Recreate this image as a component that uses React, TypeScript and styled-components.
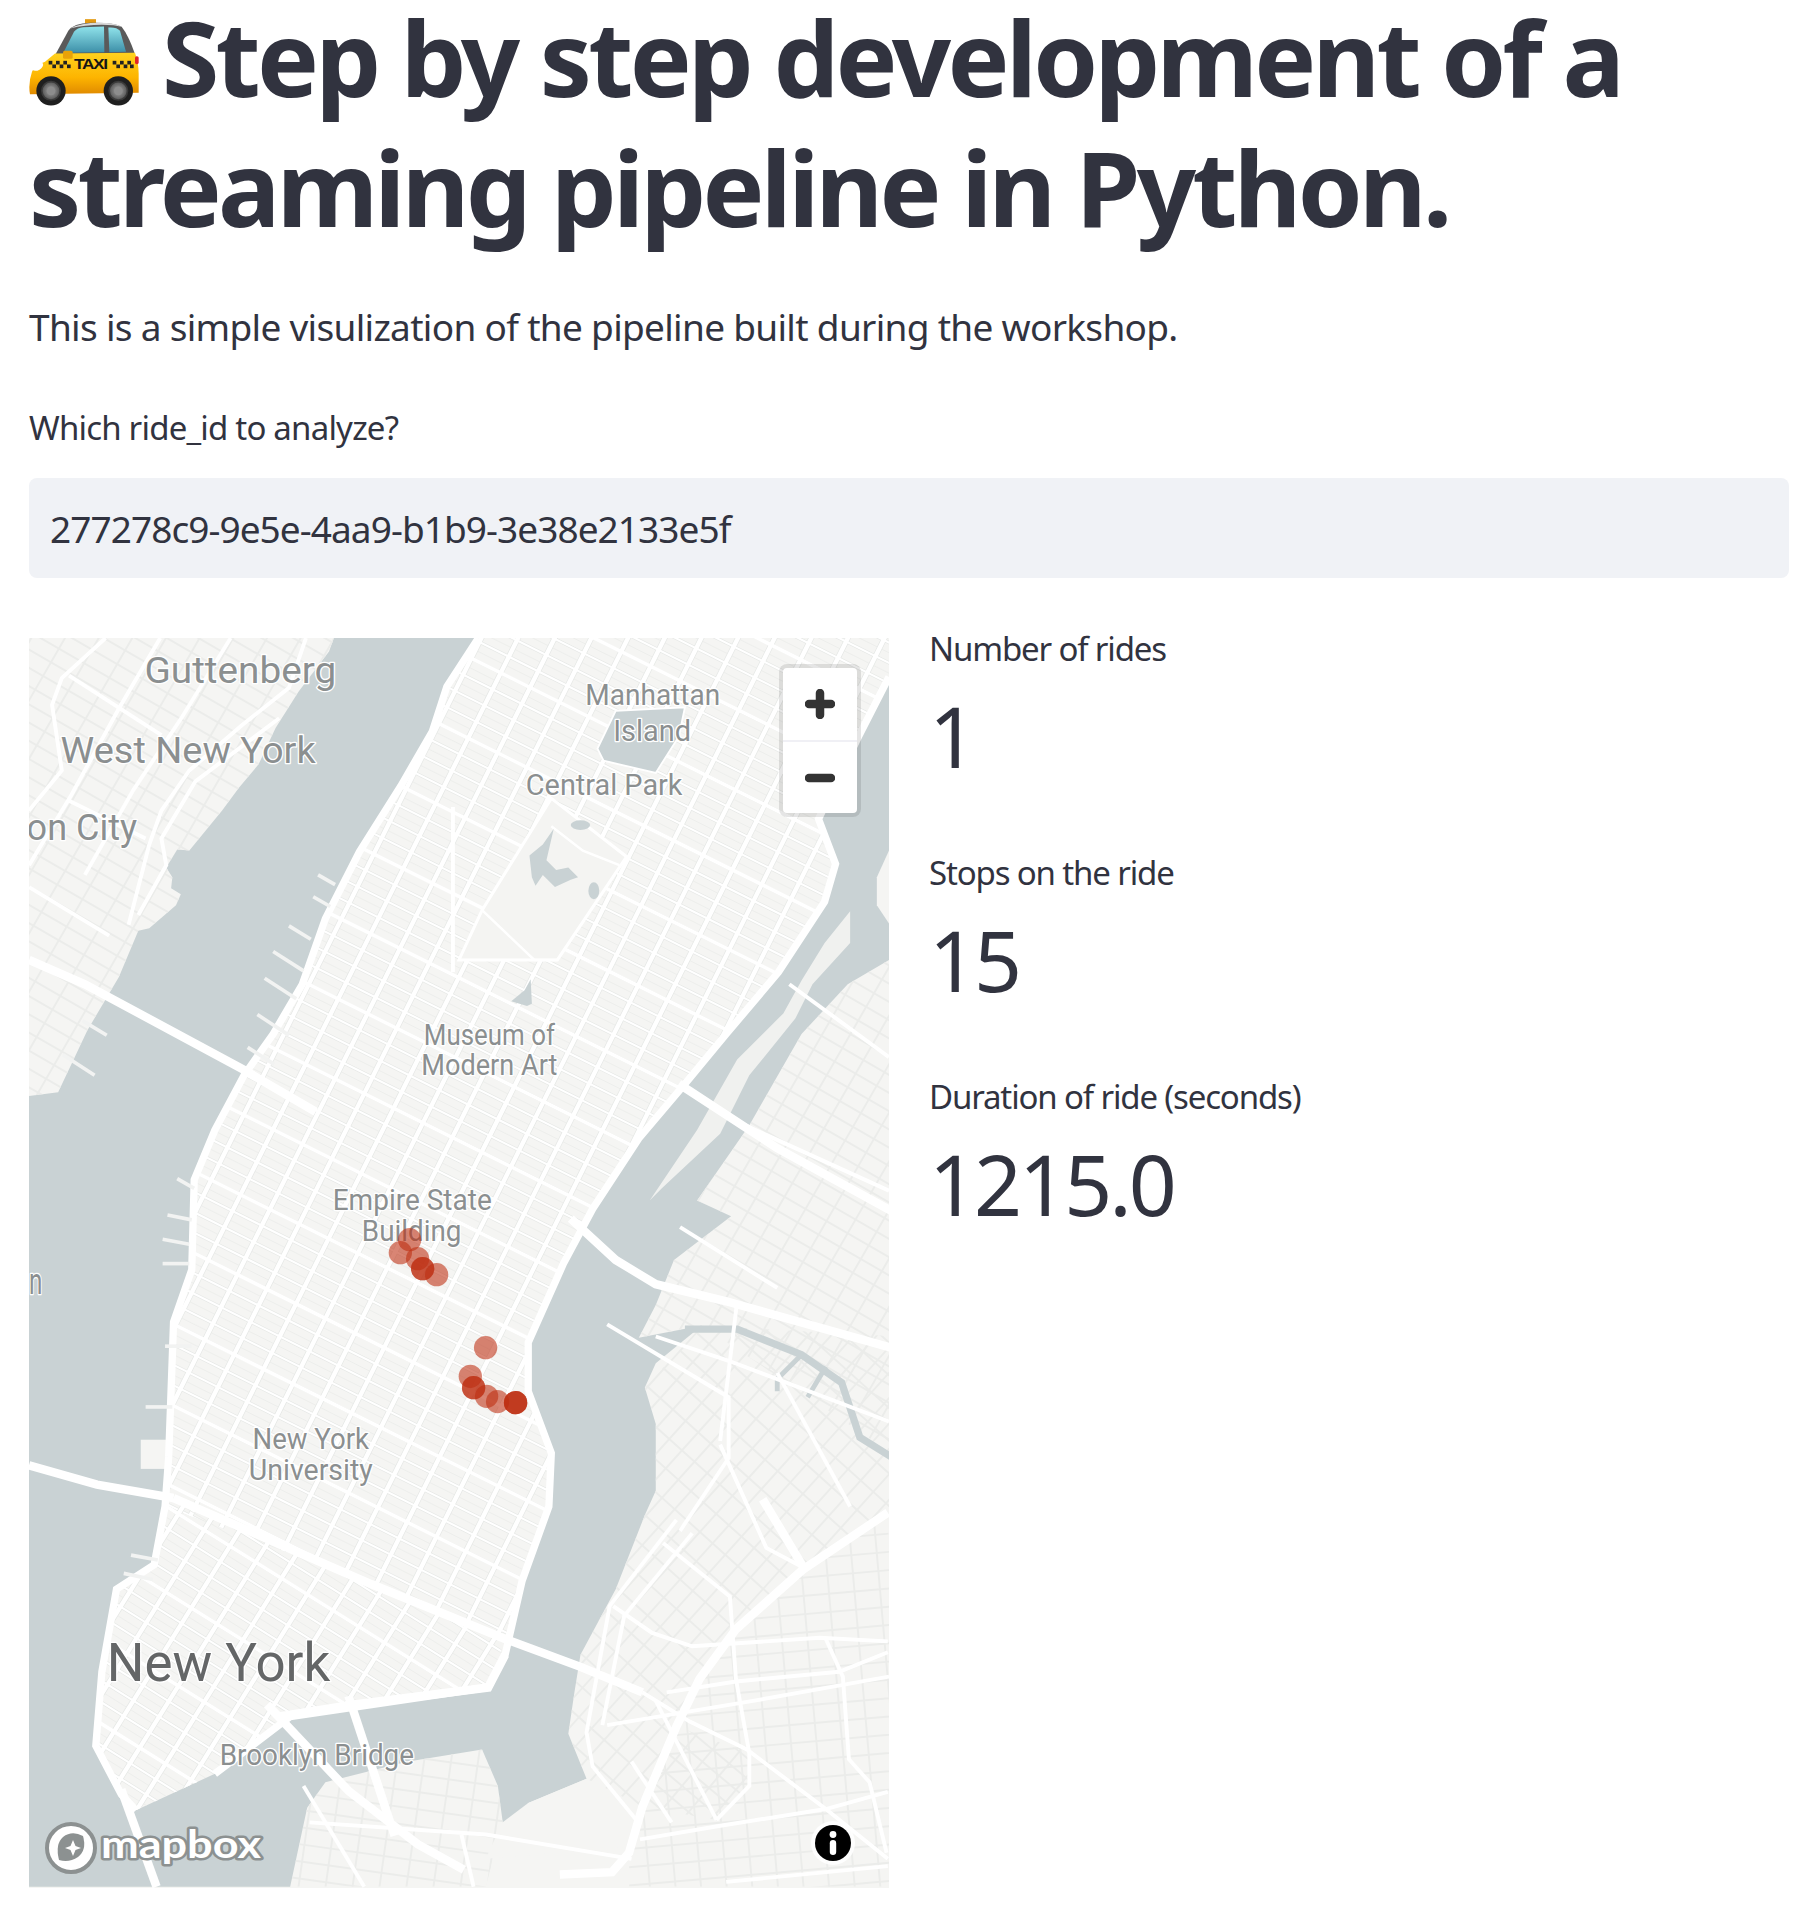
import React from 'react'
import styled, { createGlobalStyle } from 'styled-components'

const Global = createGlobalStyle`
  html, body { margin: 0; background: #fff; }
  body { font-family: "Noto Sans", "Open Sans", sans-serif; color: #31333f; }
`

const Page = styled.div`
  width: 1812px;
  height: 1906px;
  overflow: hidden;
  padding: 0 23px 0 29px;
  box-sizing: border-box;
`

const Title = styled.h1`
  margin: 0;
  font-size: 104px;
  line-height: 114px;
  font-weight: 700;
  letter-spacing: -3.7px;
  color: #31333f;
  white-space: nowrap;
`

const TitleLine = styled.span`
  display: block;
  & + & {
    margin-top: 16px;
  }
`

const TaxiIcon = styled.svg`
  width: 110px;
  height: 87px;
  margin-right: 23px;
  vertical-align: -9px;
`

const Intro = styled.p`
  margin: 54px 0 0;
  font-size: 37px;
  line-height: 58px;
  letter-spacing: -0.69px;
`

const FieldLabel = styled.label`
  display: block;
  margin-top: 50px;
  font-size: 33px;
  line-height: 44px;
  letter-spacing: -0.8px;
`

const TextField = styled.div`
  margin-top: 28px;
  height: 100px;
  padding-left: 21px;
  display: flex;
  align-items: center;
  background: #f0f2f6;
  border-radius: 8px;
  font-size: 37px;
  letter-spacing: -0.93px;
`

const Columns = styled.div`
  margin-top: 60px;
  display: flex;
  gap: 40px;
`

const MapFrame = styled.div`
  position: relative;
  width: 860px;
  height: 1250px;
  flex: none;
  overflow: hidden;
  background: #f5f5f3;
`

const MapCanvas = styled.svg`
  display: block;
  width: 860px;
  height: 1250px;
`

const ZoomGroup = styled.div`
  position: absolute;
  top: 30px;
  left: 754px;
  width: 74px;
  display: flex;
  flex-direction: column;
  background: #fff;
  border-radius: 4px;
  box-shadow: 0 0 0 4px rgba(0, 0, 0, 0.1);
`

const ZoomButton = styled.button<{ $first?: boolean }>`
  height: ${p => (p.$first ? 74 : 71)}px;
  padding: 0;
  border: 0;
  background: transparent;
  display: flex;
  align-items: center;
  justify-content: center;
  border-bottom: ${p => (p.$first ? '2px solid #f0f0f5' : '0')};
`

const InfoButton = styled.div`
  position: absolute;
  right: 34px;
  bottom: 23px;
  width: 44px;
  height: 44px;
  display: flex;
  align-items: center;
  justify-content: center;
  border-radius: 50%;
  background: rgba(255, 255, 255, 0.85);
`

const MapboxMark = styled.svg`
  position: absolute;
  left: 15px;
  bottom: 12px;
  width: 222px;
  height: 56px;
`

const Metrics = styled.div`
  display: flex;
  flex-direction: column;
`

const Metric = styled.div`
  height: 224px;
`

const MetricLabel = styled.div`
  margin-top: -11px;
  font-size: 33px;
  line-height: 44px;
  letter-spacing: -1.15px;
`

const MetricValue = styled.div`
  margin-top: 10px;
  font-size: 84px;
  line-height: 110px;
  letter-spacing: -3px;
  font-weight: 400;
`

type Pt = [number, number]

const poly = (pts: Pt[]) => 'M' + pts.map(p => p.join(' ')).join('L') + 'Z'
const open = (pts: Pt[]) => 'M' + pts.map(p => p.join(' ')).join('L')

// parallel lines through (cx, cy), all at the same angle
const hatch = (cx: number, cy: number, angle: number, step: number, shift = 0, len = 1400) => {
  const a = (angle * Math.PI) / 180
  const dx = Math.cos(a)
  const dy = Math.sin(a)
  const n = Math.ceil(len / step)
  let d = ''
  for (let k = -n; k <= n; k++) {
    const ox = cx - dy * (k * step + shift)
    const oy = cy + dx * (k * step + shift)
    d += `M${(ox - dx * len).toFixed(1)} ${(oy - dy * len).toFixed(1)}L${(ox + dx * len).toFixed(1)} ${(oy + dy * len).toFixed(1)}`
  }
  return d
}

const WATER = '#c9d2d4'
const CASING = '#e6e8e6'

type StreetProps = { clip: string; cx: number; cy: number; angle: number; across: number; along: number; wideEvery?: number }

// dense city blocks: white streets with a grey edge
const Streets = ({ clip, cx, cy, angle, across, along, wideEvery = 4 }: StreetProps) => {
  const minor = hatch(cx, cy, angle, across)
  const avenues = hatch(cx, cy, angle - 90, along)
  const major = hatch(cx, cy, angle, across * wideEvery)
  return (
    <g clipPath={`url(#${clip})`} fill="none">
      <path d={hatch(cx, cy, angle, across, across / 2)} stroke="#ecedeb" strokeWidth="0.8" />
      <path d={minor} stroke={CASING} strokeWidth="2.8" />
      <path d={avenues} stroke={CASING} strokeWidth="4.8" />
      <path d={minor} stroke="#fff" strokeWidth="1.7" />
      <path d={major} stroke="#fff" strokeWidth="3" />
      <path d={avenues} stroke="#fff" strokeWidth="3.6" />
    </g>
  )
}

// outer boroughs: only thin grey side streets, the white roads are drawn on top
const SideStreets = ({ clip, cx, cy, angle, across, along }: StreetProps) => (
  <g clipPath={`url(#${clip})`} fill="none" stroke="#ebecea" strokeWidth="1.6">
    <path d={hatch(cx, cy, angle, across)} />
    <path d={hatch(cx, cy, angle - 90, along)} />
  </g>
)

const hudsonEast: Pt[] = [
  [394, 525], [368, 565], [356, 602], [330, 647], [296, 701], [268, 756], [249, 810], [225, 851],
  [201, 885], [177, 930], [160, 971], [158, 1045], [143, 1088], [139, 1199], [136, 1240], [127, 1288],
  [96, 1308], [84, 1376], [79, 1437], [100, 1477], [112, 1490],
]
const southTip: Pt[] = [[177, 1460], [239, 1413], [306, 1403], [402, 1389], [416, 1362], [430, 1301], [452, 1240], [454, 1196], [435, 1145], [435, 1105], [464, 1040]]
const eastRiverWest: Pt[] = [[488, 995], [526, 937], [564, 892], [598, 851], [641, 800], [679, 742], [688, 711], [674, 674], [707, 606], [732, 557]]
const jerseyShore: Pt[] = [
  [275, 525], [271, 536], [246, 569], [227, 599], [213, 629], [197, 648], [183, 667], [156, 700], [146, 699],
  [137, 714], [142, 722], [141, 731], [149, 736], [145, 745], [123, 764], [114, 766], [98, 804], [72, 848], [48, 899], [24, 902],
]
const brooklynShore: Pt[] = [
  [239, 1553], [253, 1488], [268, 1467], [335, 1450], [397, 1440], [410, 1470], [414, 1500], [420, 1508], [435, 1484],
  [483, 1464], [468, 1427], [473, 1393], [478, 1362], [507, 1308], [531, 1247], [540, 1227], [540, 1172],
  [531, 1142], [540, 1122], [578, 1091], [526, 1101], [540, 1074], [555, 1037],
]
const queensShore: Pt[] = [[602, 1001], [574, 988], [617, 926], [660, 851], [698, 810], [732, 790]]

const water = [
  ...jerseyShore, [24, 1553] as Pt, ...brooklynShore, ...queensShore, ...[...eastRiverWest].reverse(),
  ...[...southTip].reverse(), ...[...hudsonEast].reverse(),
]
const rooseveltIsland: Pt[] = [
  [535, 988], [574, 930], [607, 872], [645, 834], [660, 807], [679, 776], [700, 750], [700, 776], [669, 810],
  [655, 838], [617, 885], [593, 933], [545, 978],
]

const piers: Pt[][] = [
  [[218, 805], [244, 822]], [[212, 835], [238, 852]], [[225, 783], [250, 799]], [[238, 762], [256, 773]], [[204, 862], [226, 876]],
  [[258, 738], [272, 746]], [[262, 720], [276, 728]], [[68, 840], [88, 852]], [[52, 868], [78, 885]], [[146, 970], [160, 978]],
  [[138, 1000], [158, 1004]], [[134, 1020], [156, 1024]], [[134, 1040], [156, 1040]], [[136, 1108], [158, 1108]], [[120, 1158], [142, 1158]],
  [[108, 1280], [130, 1284]], [[102, 1295], [126, 1300]],
]

const bqe: Pt[] = [[731, 1245], [661, 1292], [606, 1341], [576, 1382], [557, 1421], [529, 1487], [518, 1525], [504, 1541], [461, 1543]]

const wideRoads: Pt[][] = [
  [[24, 790], [70, 810], [200, 880], [260, 915]],
  [[24, 1206], [80, 1222], [143, 1233]],
  [[143, 1233], [306, 1304], [416, 1349], [478, 1372], [529, 1393]],
  [[559, 892], [640, 945], [740, 1000]],
  [[470, 1003], [507, 1037], [540, 1057], [598, 1071], [740, 1111]],
  [[229, 1413], [292, 1403], [402, 1389], [416, 1362]],
  [[628, 1234], [661, 1289]],
  [[220, 1403], [287, 1474], [344, 1518], [382, 1539]],
  [[287, 1396], [325, 1511]],
  [[100, 1473], [129, 1553]],
  bqe,
]

const roads: Pt[][] = [
  [[593, 1189], [631, 1274], [661, 1290]],
  [[607, 1071], [593, 1186]],
  [[373, 664], [373, 800]],
  [[87, 525], [51, 558], [43, 580], [51, 634], [24, 667]],
  [[57, 556], [133, 605]],
  [[132, 525], [98, 583], [59, 654], [24, 712]],
  [[190, 525], [150, 590], [110, 650], [70, 720]],
  [[252, 525], [238, 566], [199, 597], [156, 634], [133, 667], [123, 695], [106, 761]],
  [[230, 591], [161, 643], [133, 690], [137, 712], [114, 753]],
  [[57, 659], [120, 690]],
  [[24, 730], [90, 770]],
  [[540, 1100], [600, 1120], [732, 1170]],
  [[732, 1380], [620, 1400], [500, 1420]],
  [[529, 1393], [568, 1417], [615, 1440], [680, 1489], [731, 1530]],
  [[546, 1270], [601, 1314], [606, 1382], [617, 1443], [617, 1470], [590, 1498]],
  [[505, 1322], [537, 1344], [570, 1355], [675, 1348], [731, 1351]],
  [[549, 1393], [606, 1384], [691, 1376], [731, 1360]],
  [[680, 1349], [694, 1380], [699, 1448], [716, 1467], [730, 1525]],
  [[527, 1514], [592, 1503], [680, 1489], [731, 1475]],
  [[598, 1549], [731, 1536]],
  [[557, 1251], [502, 1322], [483, 1426], [488, 1454], [524, 1498]],
  [[570, 1262], [514, 1330], [496, 1420]],
  [[540, 1400], [590, 1498]],
  [[520, 1450], [553, 1500]],
  [[500, 1090], [600, 1150], [600, 1200], [560, 1260]],
  [[640, 1130], [700, 1240]],
  [[650, 810], [732, 870]],
  [[600, 920], [732, 980]],
  [[560, 1010], [640, 1060]],
  [[250, 1470], [300, 1553]],
  [[380, 1510], [390, 1553]],
  [[255, 1500], [400, 1510], [520, 1530]],
]

const park: Pt[] = [[454, 657], [516, 705], [459, 790], [378, 790], [397, 749]]
const reservoir: Pt[] = [[497, 626], [492, 616], [507, 585], [564, 582], [559, 606], [540, 636]]
const lake: Pt[] = [[456, 682], [447, 695], [436, 704], [438, 722], [441, 729], [447, 720], [457, 730], [470, 724], [476, 722], [468, 714], [458, 716], [450, 708]]
const pond: Pt[] = [[421, 824], [432, 815], [437, 806], [438, 826], [434, 828]]
const creek: Pt[] = [[564, 1094], [607, 1094], [660, 1115], [693, 1138], [708, 1183], [740, 1203]]
const navyYard: Pt[] = [[414, 1500], [435, 1484], [483, 1464], [524, 1498], [518, 1520], [400, 1530]]

const labels: { x: number; y: number; w: number; size: number; text: string; dark?: boolean }[] = [
  { x: 119, y: 562, w: 158, size: 31, text: 'Guttenberg' },
  { x: 50, y: 628, w: 210, size: 31, text: 'West New York' },
  { x: 22, y: 691, w: 91, size: 31, text: 'on City' },
  { x: 24, y: 1065, w: 11, size: 31, text: 'n' },
  { x: 482, y: 580, w: 111, size: 24, text: 'Manhattan' },
  { x: 505, y: 610, w: 64, size: 24, text: 'Island' },
  { x: 433, y: 654, w: 129, size: 24, text: 'Central Park' },
  { x: 349, y: 860, w: 108, size: 24, text: 'Museum of' },
  { x: 347, y: 885, w: 112, size: 24, text: 'Modern Art' },
  { x: 274, y: 996, w: 131, size: 24, text: 'Empire State' },
  { x: 298, y: 1021, w: 82, size: 24, text: 'Building' },
  { x: 208, y: 1193, w: 96, size: 24, text: 'New York' },
  { x: 205, y: 1218, w: 102, size: 24, text: 'University' },
  { x: 88, y: 1384, w: 184, size: 44, text: 'New York', dark: true },
  { x: 181, y: 1453, w: 160, size: 24, text: 'Brooklyn Bridge' },
]

// ride stops, in page pixels
const stops: Pt[] = [
  [410, 1240], [400.7, 1253], [418, 1259], [423, 1269], [423, 1269], [437, 1275], [486, 1348], [470.7, 1376.7],
  [474, 1388], [474, 1388], [487, 1396.7], [498, 1402], [516, 1403], [516, 1403], [516, 1403],
]

const TaxiEmoji = () => (
  <TaxiIcon viewBox="87 57 330 260">
    <defs>
      <linearGradient id="taxiBody" x1="0" y1="0" x2="0" y2="1">
        <stop offset="0" stopColor="#ffd21e" />
        <stop offset="0.6" stopColor="#fdb400" />
        <stop offset="1" stopColor="#e08a00" />
      </linearGradient>
      <linearGradient id="taxiGlass" x1="0" y1="0" x2="0" y2="1">
        <stop offset="0" stopColor="#8fe2ea" />
        <stop offset="1" stopColor="#3d8fa8" />
      </linearGradient>
      <radialGradient id="taxiHub">
        <stop offset="0" stopColor="#a8a8a8" />
        <stop offset="1" stopColor="#5c5c5c" />
      </radialGradient>
    </defs>
    <rect x="255" y="57" width="33" height="14" fill="#e39a10" />
    <path d="M165 165 L205 92 Q220 70 270 68 Q340 66 365 80 Q385 105 405 162 Z" fill="#5a5a5a" />
    <path d="M210 85 Q240 68 300 68 Q345 68 365 80 L340 75 Q270 70 210 85 Z" fill="#d9d9d9" />
    <path d="M190 158 L222 95 Q232 82 250 81 L312 79 L313 156 Z" fill="url(#taxiGlass)" />
    <path d="M325 82 Q350 80 360 92 L378 155 L328 156 Z" fill="url(#taxiGlass)" />
    <path d="M165 160 L405 158 Q416 190 416 220 L416 278 L90 282 Q84 250 96 215 Q104 196 135 185 Z" fill="url(#taxiBody)" />
    <ellipse cx="113" cy="199" rx="18" ry="11" transform="rotate(-30 113 199)" fill="#fff" />
    <rect x="405" y="168" width="11" height="24" rx="5" fill="#e0242a" />
    <rect x="189" y="152" width="29" height="24" rx="5" fill="#e9a208" />
    <g fill="#222">
      {[146, 168, 190, 338, 360, 382].map(x => (
        <rect key={x} x={x} y="182" width="11" height="11" />
      ))}
      {[157, 179, 201, 349, 371, 390].map(x => (
        <rect key={x} x={x} y="193" width="11" height="11" />
      ))}
    </g>
    <text x="222" y="208" fontFamily="Liberation Sans, sans-serif" fontWeight="700" fontSize="46" textLength="98" lengthAdjust="spacingAndGlyphs" fill="#161616">
      TAXI
    </text>
    {[153, 355].map(cx => (
      <g key={cx}>
        <circle cx={cx} cy="272" r="44" fill="#1f1f1f" />
        <circle cx={cx} cy="272" r="30" fill="#3a3a3a" />
        <circle cx={cx} cy="272" r="25" fill="url(#taxiHub)" />
        <circle cx={cx} cy="272" r="13" fill="#8d8d8d" />
      </g>
    ))}
  </TaxiIcon>
)

const RideMap = () => (
  <MapCanvas viewBox="24 525 708 1029">
    <defs>
      <clipPath id="clipManhattanNorth">
        <path d={poly([...hudsonEast.slice(0, 15), [306, 1304], [416, 1349], [452, 1240], [454, 1196], [435, 1145], [435, 1105], [464, 1040], ...eastRiverWest, [732, 525]])} />
      </clipPath>
      <clipPath id="clipManhattanSouth">
        <path d={poly([[139, 1233], [306, 1304], [416, 1349], [402, 1389], [306, 1403], [239, 1413], [177, 1460], [112, 1490], [100, 1477], [79, 1437], [84, 1376], [96, 1308], [127, 1288]])} />
      </clipPath>
      <clipPath id="clipJersey">
        <path d={poly([[24, 525], ...jerseyShore])} />
      </clipPath>
      <clipPath id="clipGreenpoint">
        <path d={poly([...brooklynShore.slice(9, 18), [578, 1091], [740, 1100], [740, 1245], ...bqe.slice(0, 6)])} />
      </clipPath>
      <clipPath id="clipBushwick">
        <path d={poly([...bqe.slice(0, 7), [518, 1553], [740, 1553]])} />
      </clipPath>
      <clipPath id="clipFortGreene">
        <path d={poly([[557, 1421], [617, 1443], [617, 1470], [590, 1498], [529, 1487]])} />
      </clipPath>
      <clipPath id="clipDumbo">
        <path d={poly([[239, 1553], [253, 1488], [268, 1467], [335, 1450], [397, 1440], [410, 1470], [414, 1500], [400, 1553]])} />
      </clipPath>
      <clipPath id="clipQueens">
        <path d={poly([[540, 1074], [555, 1037], ...queensShore, [740, 790], [740, 1200], [578, 1091], [526, 1101]])} />
      </clipPath>
    </defs>

    <rect x="24" y="525" width="708" height="1029" fill="#f5f5f3" />
    <path d={poly(water)} fill={WATER} />
    <path d={poly(rooseveltIsland)} fill="#f0f1ef" />
    <path d={poly([[732, 700], [722, 722], [722, 745], [732, 760]])} fill="#f5f5f3" />
    <rect x="116" y="1185" width="22" height="24" fill="#f5f5f3" />

    <Streets clip="clipManhattanNorth" cx={300} cy={900} angle={26.5} across={15} along={27} />
    <Streets clip="clipManhattanSouth" cx={200} cy={1350} angle={32} across={15} along={25} />
    <SideStreets clip="clipJersey" cx={120} cy={650} angle={30} across={13} along={24} />
    <SideStreets clip="clipGreenpoint" cx={560} cy={1300} angle={-48} across={14} along={20} />
    <SideStreets clip="clipBushwick" cx={650} cy={1420} angle={-5} across={15} along={21} />
    <SideStreets clip="clipFortGreene" cx={570} cy={1460} angle={40} across={13} along={18} />
    <SideStreets clip="clipDumbo" cx={320} cy={1500} angle={8} across={14} along={22} />
    <SideStreets clip="clipQueens" cx={620} cy={1030} angle={30} across={13} along={20} />

    <path d={poly(navyYard)} fill="#f5f5f3" />
    <path d={poly(park)} fill="#f4f4f2" stroke="#fff" strokeWidth="2.5" />
    <path d="M397 749 L440 790 L459 790 M454 680 L480 700 L510 712" fill="none" stroke="#fff" strokeWidth="2" />
    <path d={poly(reservoir)} fill={WATER} stroke="#fff" strokeWidth="1.5" />
    <path d={poly(lake)} fill={WATER} />
    <ellipse cx="489" cy="733" rx="4.5" ry="7" fill={WATER} />
    <ellipse cx="478" cy="679" rx="8" ry="4" fill={WATER} />
    <path d={poly(pond)} fill={WATER} />
    <path d={open(creek)} fill="none" stroke={WATER} strokeWidth="6" />
    <path d="M660 1115 L640 1135 L640 1145 M680 1125 L665 1150" fill="none" stroke={WATER} strokeWidth="4" />

    {/* shoreline drives */}
    <path d={open(hudsonEast)} fill="none" stroke="#fff" strokeWidth="6" />
    <path d={open([...southTip, ...eastRiverWest])} fill="none" stroke="#fff" strokeWidth="6" />
    {piers.map((p, i) => (
      <path key={i} d={open(p)} stroke="#f2f3f2" strokeWidth="3" fill="none" />
    ))}
    {roads.map((p, i) => (
      <path key={i} d={open(p)} stroke="#fff" strokeWidth="3.2" fill="none" />
    ))}
    {wideRoads.map((p, i) => (
      <path key={i} d={open(p)} stroke="#fff" strokeWidth="7" fill="none" />
    ))}

    {labels.map(l => (
      <text
        key={l.text + l.y}
        x={l.x}
        y={l.y}
        textLength={l.w}
        lengthAdjust="spacingAndGlyphs"
        fontFamily="Roboto, sans-serif"
        fontSize={l.size}
        fill={l.dark ? '#646667' : '#8b8f90'}
        stroke="#fff"
        strokeWidth="2.2"
        strokeLinejoin="round"
        paintOrder="stroke"
      >
        {l.text}
      </text>
    ))}

    {stops.map((s, i) => (
      <circle key={i} cx={s[0] / 1.2153} cy={s[1] / 1.2153} r={9.6} fill="rgb(190, 45, 15)" fillOpacity="0.58" />
    ))}
  </MapCanvas>
)

export default function App() {
  return (
    <Page>
      <Global />
      <Title>
        <TitleLine>
          <TaxiEmoji />
          Step by step development of a
        </TitleLine>
        <TitleLine>streaming pipeline in Python.</TitleLine>
      </Title>
      <Intro>This is a simple visulization of the pipeline built during the workshop.</Intro>
      <FieldLabel>Which ride_id to analyze?</FieldLabel>
      <TextField>277278c9-9e5e-4aa9-b1b9-3e38e2133e5f</TextField>
      <Columns>
        <MapFrame>
          <RideMap />
          <ZoomGroup>
            <ZoomButton $first>
              <svg width="30" height="30" viewBox="0 0 30 30">
                <path d="M4 15H26M15 4V26" stroke="#333" strokeWidth="8.5" strokeLinecap="round" />
              </svg>
            </ZoomButton>
            <ZoomButton>
              <svg width="30" height="30" viewBox="0 0 30 30">
                <path d="M4 15H26" stroke="#333" strokeWidth="8.5" strokeLinecap="round" />
              </svg>
            </ZoomButton>
          </ZoomGroup>
          <MapboxMark viewBox="0 0 222 56">
            <circle cx="27" cy="28" r="24" fill="#fff" stroke="#8c9191" strokeWidth="4" />
            <path d="M15 40 Q11 24 19 17 Q28 10 39 16 Q43 30 34 37 Q25 43 15 40 Z" fill="#8c9191" />
            <path d="M29 20 L31.5 26 L37 28 L31.5 30 L29 36 L26.5 30 L21 28 L26.5 26 Z" fill="#fff" />
            <text x="57" y="38" fontFamily="Lato, sans-serif" fontWeight="700" fontSize="39" textLength="160" lengthAdjust="spacingAndGlyphs" fill="#fff" stroke="#8c9191" strokeWidth="5" strokeLinejoin="round" paintOrder="stroke">
              mapbox
            </text>
          </MapboxMark>
          <InfoButton>
            <svg width="36" height="36" viewBox="0 0 36 36">
              <circle cx="18" cy="18" r="18" fill="#000" />
              <circle cx="18" cy="9.5" r="3.4" fill="#fff" />
              <rect x="14.8" y="15" width="6.4" height="15" rx="3.2" fill="#fff" />
            </svg>
          </InfoButton>
        </MapFrame>
        <Metrics>
          <Metric>
            <MetricLabel>Number of rides</MetricLabel>
            <MetricValue>1</MetricValue>
          </Metric>
          <Metric>
            <MetricLabel>Stops on the ride</MetricLabel>
            <MetricValue>15</MetricValue>
          </Metric>
          <Metric>
            <MetricLabel>Duration of ride (seconds)</MetricLabel>
            <MetricValue>1215.0</MetricValue>
          </Metric>
        </Metrics>
      </Columns>
    </Page>
  )
}
